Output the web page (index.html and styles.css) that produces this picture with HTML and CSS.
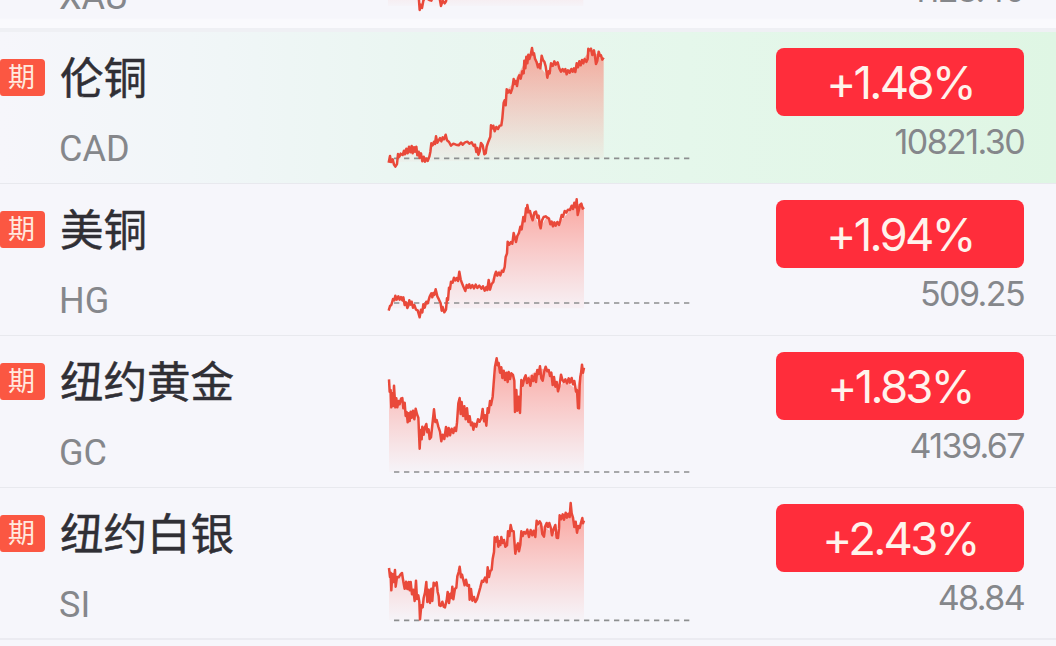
FILE: index.html
```html
<!DOCTYPE html>
<html lang="zh-CN">
<head>
    <meta charset="UTF-8">
    <meta name="viewport" content="width=device-width, initial-scale=1.0">
    <title>期货行情</title>
    <link rel="stylesheet" href="styles.css">
</head>
<body>
    <svg class="defs" width="0" height="0">
        <defs>
            <linearGradient id="fade" x1="0" y1="0" x2="0" y2="1">
                <stop offset="0" stop-color="#ff5a48" stop-opacity="0.5"/>
                <stop offset="0.5" stop-color="#ff6a5c" stop-opacity="0.27"/>
                <stop offset="1" stop-color="#ff7a6c" stop-opacity="0.02"/>
            </linearGradient>
        </defs>
    </svg>
    <div class="list">
        <div class="row row-first">
            <span class="tag">期</span>
            <div class="info">
                <div class="name">伦敦金</div>
                <div class="code">XAU</div>
            </div>
            <svg class="chart" viewBox="0 -360 960 456">
                <path class="area" d="M24,-200 H610 V18 H24 Z"/>
                <polyline class="line" points="112,-40 116,-12 119,30 122,14 126,24 130,2 136,-8 148,0 154,2 160,-12 178,-10 183,18 188,2 194,10 198,4 202,-20"/>
            </svg>
            <div class="quote">
                <div class="change">+1.31%</div>
                <div class="price">4128.40</div>
            </div>
        </div>

        <div class="row row-active">
            <span class="tag">期</span>
            <div class="info">
                <div class="name">伦铜</div>
                <div class="code">CAD</div>
            </div>
            <svg class="chart" viewBox="0 96 960 456">
                <path class="area" d="M26,486 L46,498 L60,465 L96,442 L120,472 L145,475 L158,430 L170,418 L196,408 L215,432 L268,425 L295,460 L318,460 L334,378 L360,380 L380,270 L400,250 L430,195 L456,150 L480,200 L504,230 L524,188 L545,212 L590,205 L630,150 L671,175 V475 Z"/>
                <line class="base" x1="42" y1="475" x2="930" y2="475"/>
                <polyline class="line" points="26,488 30,468 33,486 38,478 42,494 46,500 51,492 54,462 58,470 62,461 68,465 72,452 75,463 79,446 83,460 87,440 91,457 95,438 98,460 102,442 105,455 109,440 112,466 116,455 119,474 123,460 127,484 131,470 135,485 139,476 143,483 148,470 151,456 154,430 158,436 162,425 165,432 168,409 172,428 176,421 180,414 184,424 188,412 192,418 197,404 201,421 207,426 213,437 220,431 228,434 236,436 243,428 248,434 255,427 262,425 268,431 275,427 281,438 285,434 289,456 292,444 295,464 299,454 303,429 308,436 313,463 317,460 320,440 325,425 331,410 333,376 337,385 340,377 344,394 349,381 354,387 359,377 364,376 367,355 371,308 374,301 377,316 380,268 384,278 388,271 392,279 397,265 401,237 404,252 408,243 411,258 415,233 418,226 422,236 427,214 431,220 433,182 436,205 439,170 442,190 445,164 448,177 452,165 456,144 459,164 462,160 465,176 470,187 474,202 478,193 481,205 485,167 489,180 493,185 497,199 502,233 506,214 509,220 513,190 518,198 523,184 527,194 533,187 538,205 543,215 548,207 552,214 556,207 560,223 564,211 569,218 574,207 578,215 582,205 586,216 590,190 594,202 598,184 602,196 606,180 610,190 614,177 619,186 623,177 625,146 629,151 633,146 637,165 642,151 645,170 648,192 652,182 656,155 660,167 663,166 667,179 671,173"/>
            </svg>
            <div class="quote">
                <div class="change">+1.48%</div>
                <div class="price">10821.30</div>
            </div>
        </div>

        <div class="row">
            <span class="tag">期</span>
            <div class="info">
                <div class="name">美铜</div>
                <div class="code">HG</div>
            </div>
            <svg class="chart" viewBox="0 -3 960 456">
                <path class="area" d="M26,372 L45,338 L80,356 L120,390 L160,322 L192,380 L212,295 L238,270 L256,310 L320,308 L346,264 L373,245 L388,178 L410,150 L440,70 L465,95 L481,128 L500,95 L520,120 L540,110 L590,55 L612,65 V370 H26 Z"/>
                <line class="base" x1="42" y1="354" x2="930" y2="354"/>
                <polyline class="line" points="26,377 30,363 34,360 39,342 43,346 46,332 50,344 55,334 59,344 63,336 67,346 70,337 74,360 78,352 82,369 85,362 88,346 92,359 95,350 99,368 103,360 108,374 113,376 119,397 123,374 127,382 130,358 134,368 139,350 143,355 149,335 154,325 157,337 160,324 163,330 167,313 172,334 177,344 182,355 185,377 188,366 193,382 198,374 201,340 204,345 207,308 210,312 213,290 218,293 222,278 226,286 230,279 234,288 238,260 242,283 246,295 251,307 256,318 260,300 264,308 268,298 272,309 277,300 282,310 287,299 292,309 298,302 304,311 309,304 314,317 319,306 322,315 326,285 330,314 335,297 340,291 345,268 348,260 352,272 357,263 361,271 366,257 370,260 374,246 377,216 381,205 383,170 388,179 393,171 397,176 401,144 405,160 408,171 412,153 417,144 421,125 425,133 430,96 434,109 438,70 441,82 442,60 446,82 450,78 454,95 458,106 463,83 468,80 472,98 476,92 479,120 482,130 486,106 491,96 497,94 502,98 507,101 511,118 515,110 519,124 523,112 527,122 532,111 537,120 541,106 545,90 549,95 554,78 559,83 564,74 570,75 575,62 579,72 583,53 587,67 590,43 593,90 596,78 600,60 604,56 608,71 612,67"/>
            </svg>
            <div class="quote">
                <div class="change">+1.94%</div>
                <div class="price">509.25</div>
            </div>
        </div>

        <div class="row">
            <span class="tag">期</span>
            <div class="info">
                <div class="name">纽约黄金</div>
                <div class="code">GC</div>
            </div>
            <svg class="chart" viewBox="0 -12 960 456">
                <path class="area" d="M27,120 L40,195 L66,175 L85,240 L108,220 L120,310 L140,265 L150,290 L162,225 L186,300 L225,270 L239,185 L280,260 L320,240 L338,175 L351,60 L370,95 L400,105 L410,210 L422,210 L430,120 L480,85 L500,90 L535,145 L555,120 L590,150 L605,80 L612,90 V396 H27 Z"/>
                <line class="base" x1="42" y1="396" x2="930" y2="396"/>
                <polyline class="line" points="27,118 29,155 32,150 34,202 37,160 40,198 42,137 46,202 49,175 52,202 56,183 59,193 63,176 67,174 70,205 74,188 77,228 80,216 83,247 86,220 89,243 92,215 95,233 99,212 103,238 107,206 111,223 115,233 119,326 122,270 125,298 127,260 131,284 135,262 139,252 142,277 146,268 149,297 153,292 157,255 162,208 166,246 170,240 175,260 180,275 184,304 188,284 193,297 198,261 202,289 206,264 210,286 215,266 220,279 224,263 228,273 231,248 235,190 239,174 242,222 245,186 249,228 253,199 257,238 261,205 265,246 269,229 273,256 277,248 280,269 284,251 289,260 294,238 299,245 304,234 308,207 312,244 315,226 319,257 323,205 326,218 330,183 333,195 338,170 341,130 345,80 350,55 353,76 356,69 360,98 364,82 367,114 371,92 375,120 379,98 383,126 386,96 390,117 394,100 399,105 403,122 405,216 409,150 412,212 416,170 420,219 424,120 428,137 433,115 437,106 441,129 446,115 451,137 456,108 460,123 465,103 468,126 472,90 476,102 480,79 484,115 488,122 493,94 497,80 502,94 506,90 510,108 514,98 518,135 522,111 526,140 530,126 534,154 538,139 543,104 547,119 551,126 556,118 561,130 566,115 570,128 575,114 579,133 583,123 588,155 591,150 594,204 597,205 599,136 601,110 603,100 606,74 609,98 612,83"/>
            </svg>
            <div class="quote">
                <div class="change">+1.83%</div>
                <div class="price">4139.67</div>
            </div>
        </div>

        <div class="row row-last">
            <span class="tag">期</span>
            <div class="info">
                <div class="name">纽约白银</div>
                <div class="code">SI</div>
            </div>
            <svg class="chart" viewBox="0 -12 960 456">
                <path class="area" d="M27,230 L40,270 L66,250 L90,290 L120,340 L140,285 L155,320 L168,275 L185,340 L225,300 L238,235 L270,290 L290,325 L310,260 L330,240 L346,140 L380,150 L395,110 L407,175 L425,120 L465,125 L480,95 L500,110 L535,130 L545,75 L573,60 L590,110 L612,90 V385 H27 Z"/>
                <line class="base" x1="42" y1="385" x2="930" y2="385"/>
                <polyline class="line" points="27,228 30,255 32,242 34,295 37,246 41,270 45,234 47,284 51,255 56,256 61,248 66,243 70,269 74,290 78,269 82,291 86,270 89,295 92,270 96,307 100,293 104,327 108,266 111,321 115,310 118,330 120,382 124,340 128,346 131,318 135,302 139,270 142,330 146,293 150,333 154,290 157,327 161,272 165,280 170,271 173,300 176,312 178,340 182,342 187,329 191,344 195,346 200,325 203,300 207,333 211,305 214,318 217,284 220,322 225,290 229,287 232,253 236,240 239,224 243,256 246,248 250,264 254,280 258,263 262,281 267,279 269,323 273,291 277,326 282,315 286,330 291,322 296,304 301,286 306,266 310,269 315,257 320,271 323,226 327,255 331,237 335,233 338,201 342,180 344,136 348,149 352,134 355,164 358,148 361,159 364,135 368,153 372,144 376,164 381,160 384,118 388,132 392,99 396,117 401,118 406,185 410,163 414,154 417,178 421,158 424,118 428,132 432,120 437,125 442,113 447,135 452,114 457,130 461,116 466,135 470,86 474,97 479,88 483,95 487,126 492,134 496,102 500,93 504,105 508,93 512,106 516,130 521,110 526,99 530,137 534,138 537,110 539,70 543,82 548,67 552,83 557,62 561,77 565,65 569,75 572,33 575,64 579,77 583,105 587,89 591,122 595,102 599,108 603,92 607,78 609,94 612,86"/>
            </svg>
            <div class="quote">
                <div class="change">+2.43%</div>
                <div class="price">48.84</div>
            </div>
        </div>
    </div>
</body>
</html>
```
FILE: styles.css
```css
:root {
    --bg-color: #f6f6fb;
    --line-color: #e8e9ee;
    --red: #ff2d3b;
    --tag-color: #fb5742;
    --text-color: #302f35;
    --gray: #85878b;
}

* {
    box-sizing: border-box;
}

body {
    margin: 0;
    height: 646px;
    overflow: hidden;
    background: var(--bg-color);
    font-family: Roboto, 'Noto Sans CJK SC', sans-serif;
    color: var(--text-color);
}

.defs {
    display: block;
}

/* 列表向上滚动，第一行只露出底部 */
.list {
    margin-top: -120px;
}

.row {
    display: grid;
    grid-template-columns: 60px 320px 320px 1fr;
    height: 152px;
    padding-right: 32px;
    border-bottom: 1px solid var(--line-color);
}

.row-first {
    border-bottom: 4px solid #eff0f4;
    background: linear-gradient(to top, #fafafd 8px, var(--bg-color) 10px);
}

.row-last {
    border-bottom: 2px solid #ebebf1;
}

.row-active {
    background: linear-gradient(90deg, #f6f6fb 0%, #f1f6f8 18%, #eaf6f1 40%, #e5f7eb 65%, #dff6e4 100%);
}

.tag {
    width: 45px;
    height: 37px;
    margin-top: 27px;
    border-radius: 3px 4px 4px 3px;
    background: var(--tag-color);
    color: #ffe9df;
    font-size: 27px;
    line-height: 39px;
    padding-left: 8px;
}

.info {
    padding-top: 17px;
}

.name {
    font-size: 43.5px;
    line-height: 62px;
    -webkit-text-stroke: 0.5px var(--text-color);
}

.code {
    margin-top: 17px;
    margin-left: -1px;
    font-size: 36px;
    line-height: 42px;
    color: var(--gray);
}

.chart {
    display: block;
    width: 320px;
    height: 152px;
}

.area {
    fill: url(#fade);
}

.base {
    stroke: #8d8f90;
    stroke-width: 5;
    stroke-dasharray: 16 14;
}

.line {
    fill: none;
    stroke: #e9493a;
    stroke-width: 7.5;
    stroke-linejoin: round;
}

.quote {
    display: flex;
    flex-direction: column;
    align-items: flex-end;
    padding-top: 16px;
    font-family: Inter, sans-serif;
}

.change {
    width: 248px;
    height: 68px;
    border-radius: 8px;
    background: var(--red);
    color: #fff3ec;
    font-size: 45.5px;
    line-height: 70px;
    letter-spacing: -2.7px;
    text-align: center;
}

.price {
    margin-top: 5px;
    font-size: 34px;
    line-height: 42px;
    letter-spacing: -1.6px;
    color: var(--gray);
}
```
